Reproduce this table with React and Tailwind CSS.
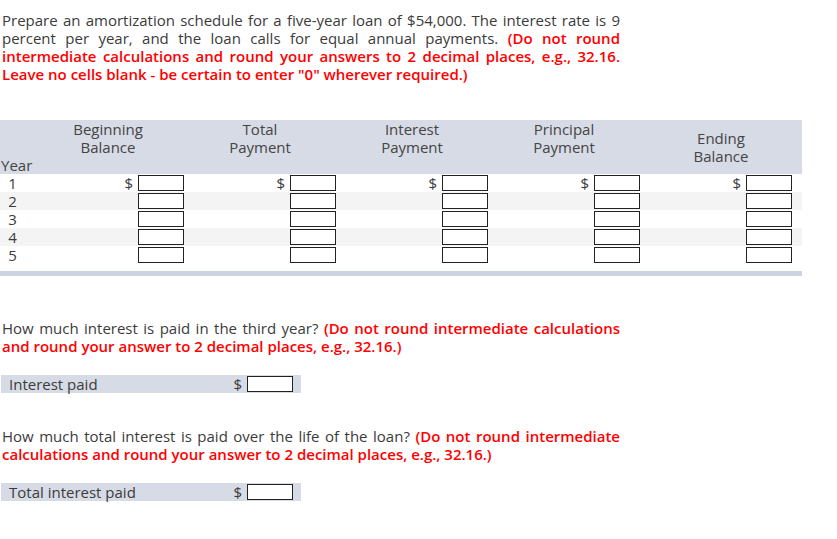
import React from 'react';

const cols = [
  { name: ['Beginning', 'Balance'] },
  { name: ['Total', 'Payment'] },
  { name: ['Interest', 'Payment'] },
  { name: ['Principal', 'Payment'] },
  { name: ['Ending', 'Balance'], center: true },
];

const Line = ({ children, last }) => (
  <div className={last ? 'text-left' : 'text-justify [text-align-last:justify]'}>{children}</div>
);

const Red = ({ children }) => <span className="font-semibold text-[#ff0000]">{children}</span>;

const Box = () => <input type="text" className="w-[46px] h-[16px] border border-[#222] bg-white outline-none" />;

const AnswerRow = ({ label }) => (
  <div className="flex items-center w-[300px] h-[18px] ml-[1px] bg-[#d7dbe6]">
    <span className="pl-[8px] flex-1">{label}</span>
    <span className="mr-[5px]">$</span>
    <Box />
    <span className="w-[8px]" />
  </div>
);

export default function App() {
  return (
    <div className="w-[837px] h-[539px] bg-white text-[#3b3b3b] text-[15px] leading-[18px] font-['Open_Sans','Liberation_Sans',sans-serif]">
      <div className="w-[620px] pl-[2px] pt-[11px]">
        <Line>Prepare an amortization schedule for a five-year loan of $54,000. The interest rate is 9</Line>
        <Line>percent per year, and the loan calls for equal annual payments. <Red>(Do not round</Red></Line>
        <Line><Red>intermediate calculations and round your answers to 2 decimal places, e.g., 32.16.</Red></Line>
        <Line last><Red>Leave no cells blank - be certain to enter "0" wherever required.)</Red></Line>
      </div>

      {/* Schedule */}
      <div className="mt-[37px] w-[802px]">
        <div className="grid grid-cols-[32px_152px_152px_152px_152px_162px] h-[54px] bg-[#d7dbe6] text-[#444]">
          <div className="flex items-end pl-[1px]">Year</div>
          {cols.map((c) => (
            <div key={c.name.join()} className={`flex flex-col text-center ${c.center ? 'justify-center' : 'justify-start'}`}>
              <span>{c.name[0]}</span>
              <span>{c.name[1]}</span>
            </div>
          ))}
        </div>
        {[1, 2, 3, 4, 5].map((y) => (
          <div
            key={y}
            className={`grid grid-cols-[32px_152px_152px_152px_152px_162px] h-[18px] ${y % 2 === 0 ? 'bg-[#f4f4f4]' : 'bg-white'}`}
          >
            <div className="w-[25px] text-center">{y}</div>
            {cols.map((c, i) => (
              <div key={i} className={`flex items-center justify-end ${i === 4 ? 'pr-[10px]' : ''}`}>
                {y === 1 && <span className="mr-[5px]">$</span>}
                <Box />
              </div>
            ))}
          </div>
        ))}
        <div className="mt-[7px] h-[5px] bg-[#cdd3e0]" />
      </div>

      <div className="w-[620px] pl-[2px] mt-[43px]">
        <Line>How much interest is paid in the third year? <Red>(Do not round intermediate calculations</Red></Line>
        <Line last><Red>and round your answer to 2 decimal places, e.g., 32.16.)</Red></Line>
      </div>
      <div className="mt-[20px]">
        <AnswerRow label="Interest paid" />
      </div>

      <div className="w-[620px] pl-[2px] mt-[34px]">
        <Line>How much total interest is paid over the life of the loan? <Red>(Do not round intermediate</Red></Line>
        <Line last><Red>calculations and round your answer to 2 decimal places, e.g., 32.16.)</Red></Line>
      </div>
      <div className="mt-[20px]">
        <AnswerRow label="Total interest paid" />
      </div>
    </div>
  );
}
